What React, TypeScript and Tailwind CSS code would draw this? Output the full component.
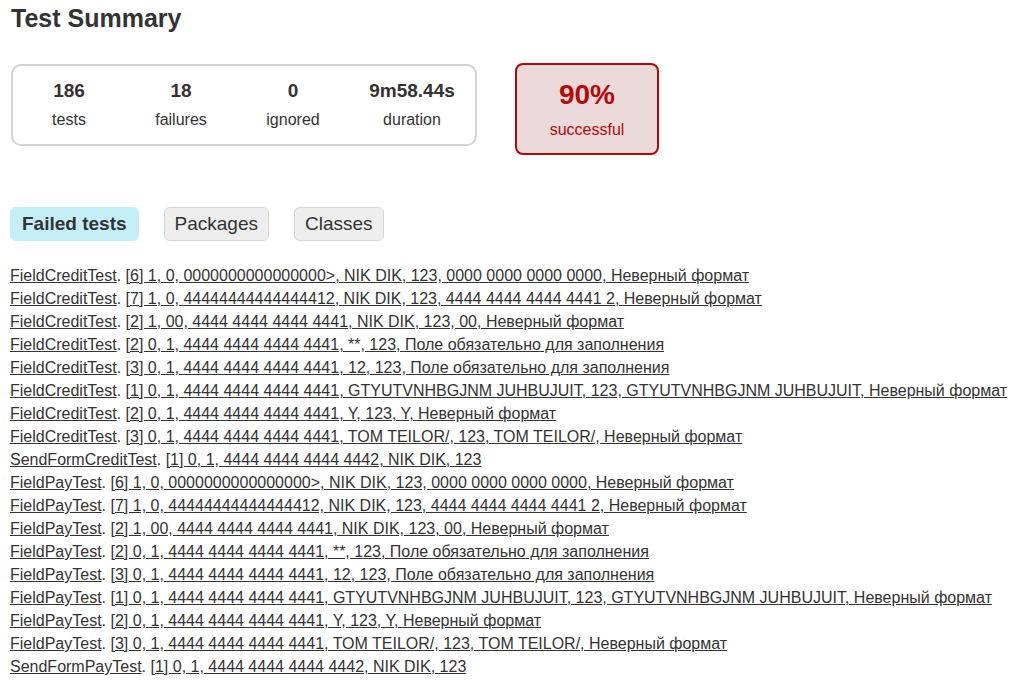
const counters = [
  { value: "186", label: "tests", w: "w-[112px]" },
  { value: "18", label: "failures", w: "w-[112px]" },
  { value: "0", label: "ignored", w: "w-[112px]" },
  { value: "9m58.44s", label: "duration", w: "w-[126px]" },
]

const failed: [string, string][] = [
  ["FieldCreditTest", "[6] 1, 0, 0000000000000000>, NIK DIK, 123, 0000 0000 0000 0000, Неверный формат"],
  ["FieldCreditTest", "[7] 1, 0, 44444444444444412, NIK DIK, 123, 4444 4444 4444 4441 2, Неверный формат"],
  ["FieldCreditTest", "[2] 1, 00, 4444 4444 4444 4441, NIK DIK, 123, 00, Неверный формат"],
  ["FieldCreditTest", "[2] 0, 1, 4444 4444 4444 4441, **, 123, Поле обязательно для заполнения"],
  ["FieldCreditTest", "[3] 0, 1, 4444 4444 4444 4441, 12, 123, Поле обязательно для заполнения"],
  ["FieldCreditTest", "[1] 0, 1, 4444 4444 4444 4441, GTYUTVNHBGJNM JUHBUJUIT, 123, GTYUTVNHBGJNM JUHBUJUIT, Неверный формат"],
  ["FieldCreditTest", "[2] 0, 1, 4444 4444 4444 4441, Y, 123, Y, Неверный формат"],
  ["FieldCreditTest", "[3] 0, 1, 4444 4444 4444 4441, TOM TEILOR/, 123, TOM TEILOR/, Неверный формат"],
  ["SendFormCreditTest", "[1] 0, 1, 4444 4444 4444 4442, NIK DIK, 123"],
  ["FieldPayTest", "[6] 1, 0, 0000000000000000>, NIK DIK, 123, 0000 0000 0000 0000, Неверный формат"],
  ["FieldPayTest", "[7] 1, 0, 44444444444444412, NIK DIK, 123, 4444 4444 4444 4441 2, Неверный формат"],
  ["FieldPayTest", "[2] 1, 00, 4444 4444 4444 4441, NIK DIK, 123, 00, Неверный формат"],
  ["FieldPayTest", "[2] 0, 1, 4444 4444 4444 4441, **, 123, Поле обязательно для заполнения"],
  ["FieldPayTest", "[3] 0, 1, 4444 4444 4444 4441, 12, 123, Поле обязательно для заполнения"],
  ["FieldPayTest", "[1] 0, 1, 4444 4444 4444 4441, GTYUTVNHBGJNM JUHBUJUIT, 123, GTYUTVNHBGJNM JUHBUJUIT, Неверный формат"],
  ["FieldPayTest", "[2] 0, 1, 4444 4444 4444 4441, Y, 123, Y, Неверный формат"],
  ["FieldPayTest", "[3] 0, 1, 4444 4444 4444 4441, TOM TEILOR/, 123, TOM TEILOR/, Неверный формат"],
  ["SendFormPayTest", "[1] 0, 1, 4444 4444 4444 4442, NIK DIK, 123"],
]

export default function App() {
  return (
    <div className="min-h-screen bg-white px-[10px] font-['Liberation_Sans',Arial,sans-serif] text-[#333]">
      <h1 className="pl-px pt-[4px] text-[25px] font-bold leading-[29px]">Test Summary</h1>

      {/* Summary boxes */}
      <div className="mt-[30px] flex items-start">
        <div className="ml-px mt-px flex h-[82px] w-[466px] rounded-[10px] border-2 border-[#d3d3d3]">
          {counters.map((c) => (
            <div key={c.label} className={`${c.w} flex flex-col items-center pt-[14px]`}>
              <div className="text-[19px] font-bold leading-[22px]">{c.value}</div>
              <div className="mt-[8px] text-[16px] leading-[20px]">{c.label}</div>
            </div>
          ))}
        </div>
        <div className="ml-[38px] flex h-[92px] w-[144px] flex-col items-center rounded-[8px] border-2 border-[#b60808] bg-[#ecdada] pt-[14px] text-[#b60808]">
          <div className="text-[28px] font-bold leading-[32px]">90%</div>
          <div className="mt-[9px] text-[16px] leading-[20px]">successful</div>
        </div>
      </div>

      {/* Tabs */}
      <div className="mt-[52px] flex gap-[25px]">
        <div className="flex h-[34px] items-center rounded-[6px] border border-[#c5eff7] bg-[#c5eff7] px-[11px] text-[19px] font-bold">
          Failed tests
        </div>
        <div className="flex h-[34px] items-center rounded-[6px] border border-[#d6d6d6] bg-[#eeeeee] px-[10px] text-[19px]">
          Packages
        </div>
        <div className="flex h-[34px] items-center rounded-[6px] border border-[#d6d6d6] bg-[#eeeeee] px-[10px] text-[19px]">
          Classes
        </div>
      </div>

      {/* Failed tests list */}
      <ul className="mt-[23px] text-[16px] leading-[23px]">
        {failed.map(([cls, test], i) => (
          <li key={i} className="whitespace-nowrap">
            <a href="#" className="underline">{cls}</a>.{" "}
            <a href="#" className="underline">{test}</a>
          </li>
        ))}
      </ul>
    </div>
  )
}
